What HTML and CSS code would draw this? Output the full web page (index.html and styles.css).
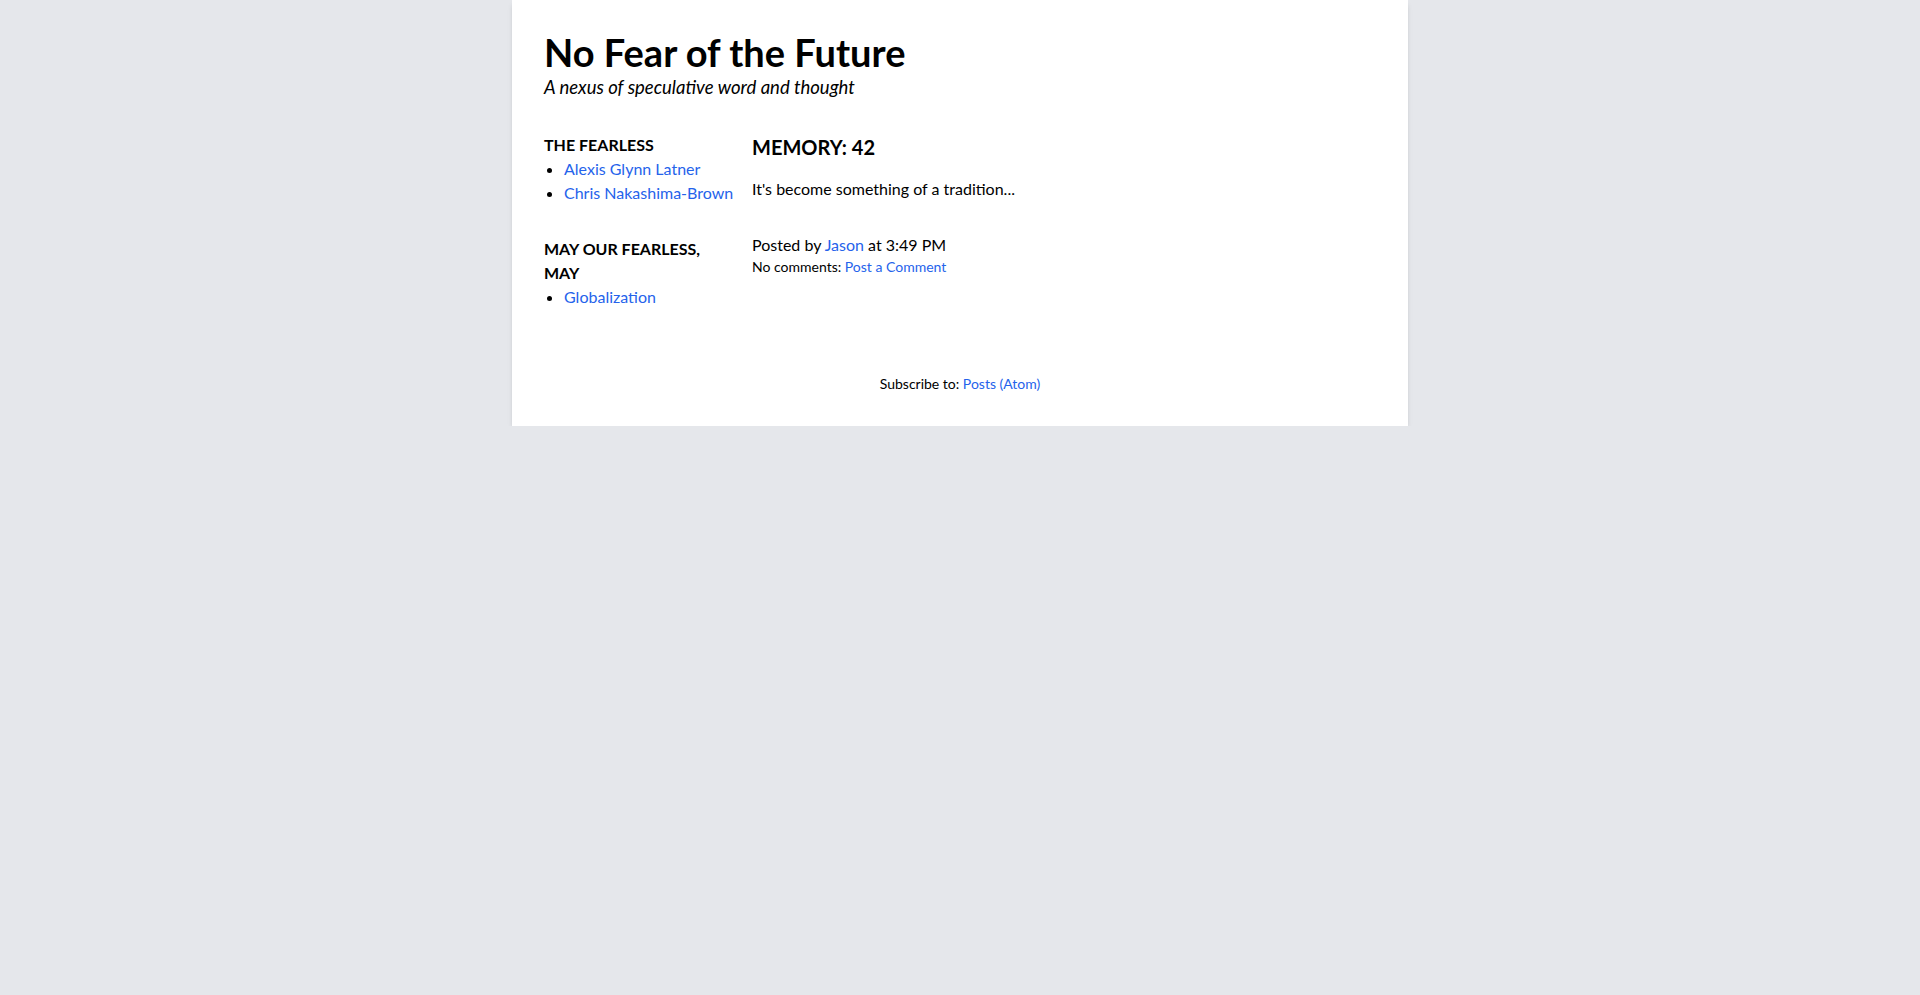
FILE: index.html
```html
<!DOCTYPE html>
<html lang="en">
<head>
<meta charset="utf-8">
<title>No Fear of the Future</title>
<link rel="stylesheet" href="styles.css">
</head>
<body>
<div class="page">
  <header class="header">
    <h1 class="title">No Fear of the Future</h1>
    <p class="tagline">A nexus of speculative word and thought</p>
  </header>
  <div class="layout">
    <aside class="sidebar">
      <section class="widget">
        <h2 class="widget-title">THE FEARLESS</h2>
        <ul class="widget-list">
          <li><a href="#">Alexis Glynn Latner</a></li>
          <li><a href="#">Chris Nakashima-Brown</a></li>
        </ul>
      </section>
      <section class="widget">
        <h2 class="widget-title">MAY OUR FEARLESS, MAY</h2>
        <ul class="widget-list">
          <li><a href="#">Globalization</a></li>
        </ul>
      </section>
    </aside>
    <main class="main">
      <article class="post">
        <h3 class="post-title">MEMORY: 42</h3>
        <p class="post-body">It's become something of a tradition...</p>
        <p class="post-meta">Posted by <a href="#">Jason</a> at 3:49 PM</p>
        <p class="post-comments">No comments: <a href="#">Post a Comment</a></p>
      </article>
    </main>
  </div>
  <footer class="footer">Subscribe to: <a href="#">Posts (Atom)</a></footer>
</div>
</body>
</html>
```

FILE: styles.css
```css
* { box-sizing: border-box; }
body {
  margin: 0;
  background: #e5e7eb;
  font-family: Lato, "Noto Sans", "Liberation Sans", sans-serif;
  color: #000;
}
a { color: #2563eb; text-decoration: none; }
.page {
  width: 896px;
  margin: 0 auto;
  background: #fff;
  padding: 32px;
  box-shadow: 0 4px 6px -1px rgba(0,0,0,0.1), 0 2px 4px -2px rgba(0,0,0,0.1);
}
.header { margin-bottom: 32px; }
.title {
  margin: 0;
  font-size: 38px;
  line-height: 41px;
  font-weight: 700;
}
.tagline {
  margin: 0;
  font-size: 18.5px;
  line-height: 28px;
  font-style: italic;
}
.layout {
  display: flex;
  gap: 16px;
}
.sidebar {
  width: 192px;
  padding-right: 16px;
  flex-shrink: 0;
  display: flex;
  flex-direction: column;
  gap: 32px;
}
.widget-title {
  margin: 0;
  font-size: 16px;
  line-height: 24px;
  font-weight: 700;
}
.widget-list {
  margin: 0;
  padding-left: 20px;
  font-size: 16px;
  line-height: 24px;
  list-style: disc;
  white-space: nowrap;
}
.main { flex: 1; }
.post-title {
  margin: 0 0 16px;
  font-size: 20px;
  line-height: 28px;
  font-weight: 700;
}
.post-body {
  margin: 0 0 32px;
  font-size: 16px;
  line-height: 24px;
}
.post-meta {
  margin: 0;
  font-size: 16px;
  line-height: 24px;
}
.post-comments {
  margin: 0;
  font-size: 14px;
  line-height: 20px;
}
.footer {
  margin-top: 65px;
  text-align: center;
  font-size: 14px;
  line-height: 20px;
}
```
